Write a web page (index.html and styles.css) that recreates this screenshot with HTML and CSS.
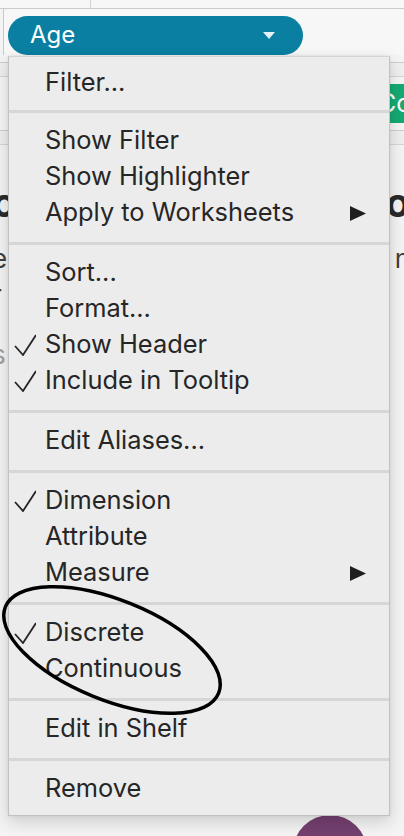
FILE: index.html
```html
<!DOCTYPE html>
<html lang="en">
<head>
<meta charset="utf-8">
<title>Age pill menu</title>
<link rel="stylesheet" href="styles.css">
</head>
<body>
<div class="page">
  <div class="topbar"><div class="tb-cell"></div></div>
  <div class="shelf">
    <div class="pill">
      <span class="pill-label">Age</span>
      <svg class="pill-caret" width="12" height="7" viewBox="0 0 12 7"><path d="M0 0H12L6 7Z" fill="#e6eff3"/></svg>
    </div>
  </div>
  <div class="shelf2">
    <div class="band"></div>
    <div class="shelf2-body"><div class="green-pill">Count</div></div>
    <div class="band"></div>
  </div>
  <div class="bg-body">
    <div class="bg-row heading"><span class="frag-left">o</span><span class="frag-right">o</span></div>
    <div class="bg-row"><span class="frag-left">e</span><span class="frag-right">n</span></div>
    <div class="bg-row"><span class="frag-left">r</span><span class="frag-right"></span></div>
    <div class="bg-row light"><span class="frag-left">s</span><span class="frag-right"></span></div>
  </div>
  <div class="circle"></div>
</div>

<div class="menu">
  <div class="group first">
    <div class="item"><span class="check"></span><span class="label">Filter...</span></div>
  </div>
  <div class="sep"></div>
  <div class="group">
    <div class="item"><span class="check"></span><span class="label">Show Filter</span></div>
    <div class="item"><span class="check"></span><span class="label">Show Highlighter</span></div>
    <div class="item"><span class="check"></span><span class="label">Apply to Worksheets</span>
      <svg class="sub" width="16" height="15" viewBox="0 0 16 15"><path d="M0 0L16 7.5L0 15Z" fill="#1e1e1e"/></svg></div>
  </div>
  <div class="sep"></div>
  <div class="group">
    <div class="item"><span class="check"></span><span class="label">Sort...</span></div>
    <div class="item"><span class="check"></span><span class="label">Format...</span></div>
    <div class="item"><span class="check"><svg width="22" height="22" viewBox="0 0 22 22"><path d="M1 12L9 21L22 1" fill="none" stroke="#262626" stroke-width="1.8"/></svg></span><span class="label">Show Header</span></div>
    <div class="item"><span class="check"><svg width="22" height="22" viewBox="0 0 22 22"><path d="M1 12L9 21L22 1" fill="none" stroke="#262626" stroke-width="1.8"/></svg></span><span class="label">Include in Tooltip</span></div>
  </div>
  <div class="sep"></div>
  <div class="group">
    <div class="item"><span class="check"></span><span class="label">Edit Aliases...</span></div>
  </div>
  <div class="sep"></div>
  <div class="group">
    <div class="item"><span class="check"><svg width="22" height="22" viewBox="0 0 22 22"><path d="M1 12L9 21L22 1" fill="none" stroke="#262626" stroke-width="1.8"/></svg></span><span class="label">Dimension</span></div>
    <div class="item"><span class="check"></span><span class="label">Attribute</span></div>
    <div class="item"><span class="check"></span><span class="label">Measure</span>
      <svg class="sub" width="16" height="15" viewBox="0 0 16 15"><path d="M0 0L16 7.5L0 15Z" fill="#1e1e1e"/></svg></div>
  </div>
  <div class="sep"></div>
  <div class="group">
    <div class="item"><span class="check"><svg width="22" height="22" viewBox="0 0 22 22"><path d="M1 12L9 21L22 1" fill="none" stroke="#262626" stroke-width="1.8"/></svg></span><span class="label">Discrete</span></div>
    <div class="item"><span class="check"></span><span class="label">Continuous</span></div>
  </div>
  <div class="sep"></div>
  <div class="group">
    <div class="item"><span class="check"></span><span class="label">Edit in Shelf</span></div>
  </div>
  <div class="sep"></div>
  <div class="group last">
    <div class="item"><span class="check"></span><span class="label">Remove</span></div>
  </div>
</div>

<svg class="annotation" width="404" height="836" viewBox="0 0 404 836">
  <ellipse cx="112" cy="650" rx="115" ry="50" transform="rotate(22 112 650)" fill="none" stroke="#000" stroke-width="3.5"/>
</svg>
</body>
</html>
```
FILE: styles.css
```css
html, body {
  margin: 0;
  padding: 0;
}
body {
  width: 404px;
  height: 836px;
  position: relative;
  overflow: hidden;
  background: #f4f4f4;
  font-family: Inter, "Liberation Sans", sans-serif;
}
.page {
  height: 836px;
  display: flex;
  flex-direction: column;
  overflow: hidden;
}
.topbar {
  height: 8px;
  background: #f7f7f7;
  border-bottom: 1px solid #cbcbcb;
  display: flex;
  flex-shrink: 0;
}
.tb-cell {
  width: 90px;
  border-right: 1px solid #d2d2d2;
}
.shelf {
  margin-left: 3px;
  border-left: 1px solid #c9c9c9;
  padding: 7px 0 0 4px;
  background: #f7f7f7;
  flex-shrink: 0;
}
.pill {
  width: 295px;
  height: 39px;
  box-sizing: border-box;
  border-radius: 20px;
  background: #0a7fa1;
  display: flex;
  align-items: center;
  justify-content: space-between;
  padding: 0 28px 0 22px;
}
.pill-label {
  color: #ffffff;
  font-size: 24px;
  line-height: 39px;
  padding-bottom: 2px;
}
.pill-caret {
  display: block;
}
.shelf2 {
  margin-top: 7px;
  flex-shrink: 0;
}
.band {
  height: 13px;
  border-top: 1px solid #cdcdcd;
  border-bottom: 1px solid #d6d6d6;
  background: #efefef;
}
.shelf2-body {
  height: 53px;
  box-sizing: border-box;
  padding-top: 7px;
  display: flex;
  justify-content: flex-end;
  background: #f6f6f6;
}
.green-pill {
  width: 40px;
  height: 39px;
  box-sizing: border-box;
  background: #15aa73;
  color: #ffffff;
  font-size: 25px;
  line-height: 39px;
  padding-left: 14px;
  overflow: hidden;
  white-space: nowrap;
}
.bg-body {
  padding-top: 34px;
  flex-shrink: 0;
}
.bg-row {
  display: flex;
  justify-content: space-between;
  height: 36px;
  font-size: 26px;
  line-height: 36px;
  color: #404040;
}
.bg-row.heading {
  height: 62px;
  font-size: 40px;
  font-weight: 700;
  line-height: 48px;
  color: #2a2a2a;
}
.bg-row.light {
  color: #a0a0a0;
  margin-top: 24px;
}
.frag-left {
  margin-left: -8px;
}
.frag-right {
  margin-right: -6px;
}
.circle {
  margin-top: auto;
  margin-left: 293px;
  margin-bottom: -53px;
  width: 74px;
  height: 74px;
  border-radius: 50%;
  background: #74406f;
  flex-shrink: 0;
}

.menu {
  position: absolute;
  top: 56px;
  left: 8px;
  width: 382px;
  box-sizing: border-box;
  background: #ececec;
  border: 1px solid #c2c2c2;
  border-top-color: #d4d4d4;
  box-shadow: 0 6px 16px rgba(0, 0, 0, 0.16), 0 0 3px rgba(0, 0, 0, 0.08);
  color: #262626;
}
.group {
  padding: 10px 0 11px;
}
.group.first {
  padding: 8px 0 9px;
}
.group.last {
  padding: 10px 0 8px;
}
.sep {
  height: 3px;
  background: #d6d6d6;
}
.item {
  height: 36px;
  box-sizing: border-box;
  padding-bottom: 4px;
  display: flex;
  align-items: center;
  font-size: 25.4px;
  white-space: nowrap;
  padding-right: 23px;
}
.check {
  width: 36px;
  flex-shrink: 0;
  display: flex;
  align-items: center;
  padding-left: 5px;
  box-sizing: border-box;
  height: 22px;
  margin-top: 4px;
}
.check svg {
  display: block;
}
.label {
  flex: 1;
}
.sub {
  display: block;
  margin-top: 4px;
}
.annotation {
  position: absolute;
  top: 0;
  left: 0;
  pointer-events: none;
}
```
